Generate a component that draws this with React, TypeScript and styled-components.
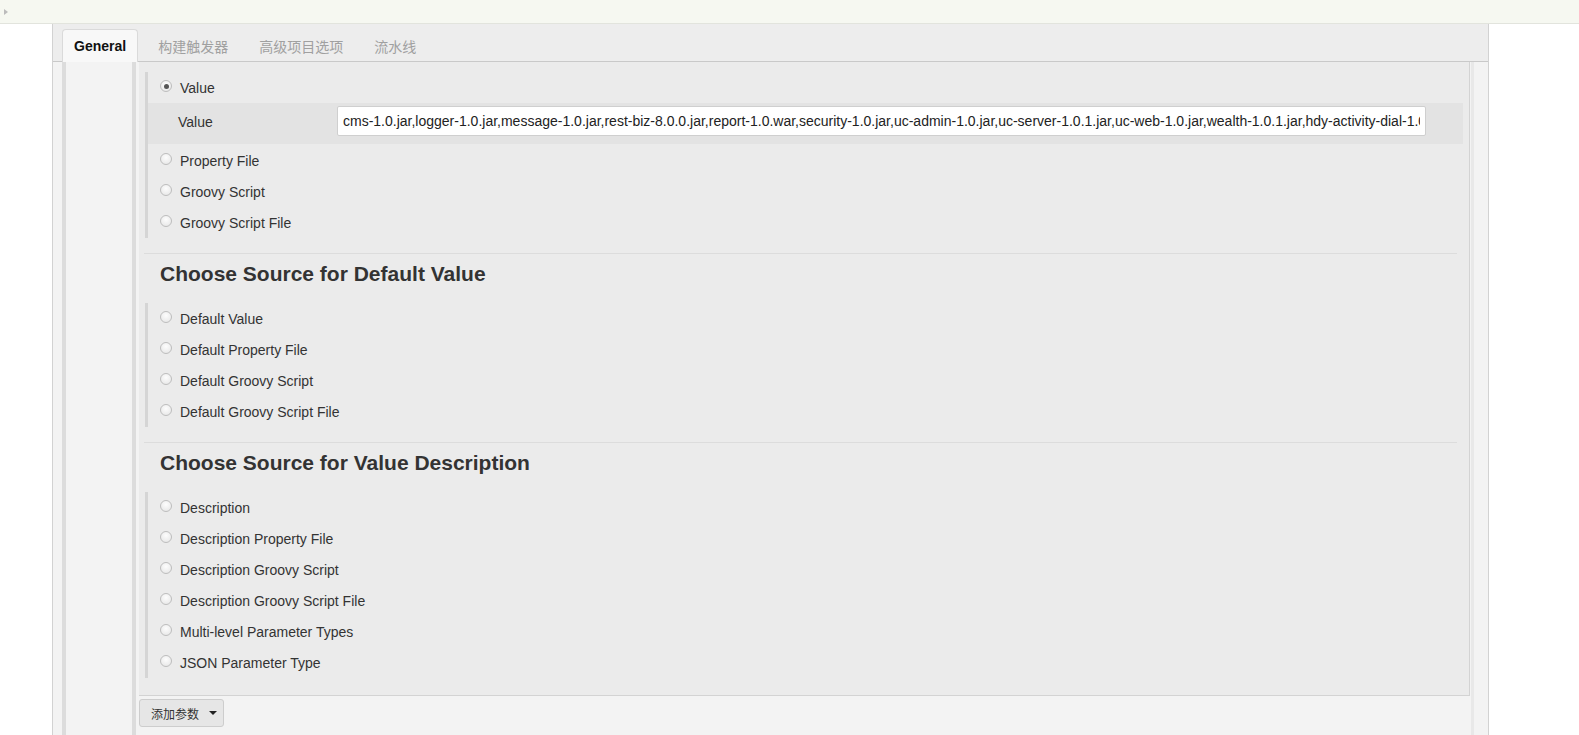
import React from "react";
import styled, { createGlobalStyle } from "styled-components";

const Global = createGlobalStyle`
  html, body { margin: 0; padding: 0; background: #fff; }
  body { font-family: "Liberation Sans", Arial, "Noto Sans CJK SC", sans-serif; color: #333; font-size: 14px; }
  * { box-sizing: border-box; }
`;

const TopBar = styled.div`
  height: 24px;
  background: #f6f8f1;
  border-bottom: 1px solid #e2e4dd;
  display: flex;
  align-items: center;
  padding-left: 4px;
`;

const Caret = styled.span`
  width: 0;
  height: 0;
  border-top: 3px solid transparent;
  border-bottom: 3px solid transparent;
  border-left: 4px solid #bcbcbc;
`;

const Main = styled.div`
  margin-left: 52px;
  width: 1437px;
  border-left: 1px solid #d2d2d2;
  border-right: 1px solid #d2d2d2;
  background: #f3f3f3;
  height: 711px;
  overflow: hidden;
  display: flex;
  flex-direction: column;
`;

const TabBar = styled.div`
  height: 38px;
  background: #ededed;
  border-bottom: 1px solid #c9c9c9;
  display: flex;
  align-items: flex-end;
  gap: 9px;
  padding-left: 9px;
`;

const Tab = styled.div<{ $active?: boolean }>`
  height: ${(p) => (p.$active ? "33px" : "31px")};
  padding: 0 11px;
  display: flex;
  align-items: center;
  font-size: 14px;
  font-family: "Liberation Sans", Arial, "Noto Sans CJK SC", sans-serif;
  color: ${(p) => (p.$active ? "#111" : "#a0a0a0")};
  font-weight: ${(p) => (p.$active ? 700 : 400)};
  background: ${(p) => (p.$active ? "#f8f8f8" : "transparent")};
  border: ${(p) => (p.$active ? "1px solid #dadada" : "none")};
  border-bottom: none;
  border-radius: 4px 4px 0 0;
  margin-bottom: ${(p) => (p.$active ? "-1px" : "0")};
  position: relative;
`;

const Body = styled.div`
  flex: 1;
  padding-left: 9px;
  display: flex;
`;

const OuterLane = styled.div`
  flex: 1;
  border-left: 4px solid #dcdcdc;
  border-right: 3px solid #e8e8e8;
  margin-right: 14px;
  padding-left: 66px;
  display: flex;
`;

const InnerLane = styled.div`
  flex: 1;
  border-left: 4px solid #dcdcdc;
  padding-left: 3px;
  padding-right: 1px;
  display: flex;
  flex-direction: column;
`;

const Panel = styled.div`
  background: #ebebeb;
  border-right: 1px solid #d3d3d3;
  border-bottom: 1px solid #d3d3d3;
  padding: 10px 6px 17px 5px;
  display: flex;
  flex-direction: column;
`;

const Group = styled.div<{ $top?: number }>`
  margin-left: 1px;
  margin-top: ${(p) => p.$top ?? 0}px;
  border-left: 3px solid #d5d5d5;
  display: flex;
  flex-direction: column;
`;

const RadioRow = styled.label`
  height: 31px;
  display: flex;
  align-items: center;
  padding-left: 12px;
  gap: 8px;
  font-size: 14px;
  color: #333;
`;

const RadioDot = styled.span<{ $checked?: boolean }>`
  width: 12px;
  height: 12px;
  border-radius: 50%;
  border: 1px solid #bdbdbd;
  background: radial-gradient(circle at 50% 35%, #fdfdfd 0%, #e4e4e4 100%);
  display: inline-flex;
  align-items: center;
  justify-content: center;
  margin-top: -3px;
  &::after {
    content: "";
    width: 5px;
    height: 5px;
    border-radius: 50%;
    background: ${(p) => (p.$checked ? "#555" : "transparent")};
  }
`;

const FieldRow = styled.div`
  height: 41px;
  margin-bottom: 1px;
  background: #e3e3e3;
  display: flex;
  align-items: center;
  padding-left: 30px;
  padding-right: 37px;
`;

const FieldLabel = styled.span`
  width: 159px;
  font-size: 14px;
  color: #333;
  margin-top: -4px;
`;

const TextInput = styled.input`
  flex: 1;
  height: 30px;
  border: 1px solid #cfcfcf;
  border-radius: 2px;
  background: #fff;
  padding: 0 5px;
  font-family: "Liberation Sans", Arial, sans-serif;
  font-size: 14px;
  color: #222;
  margin-top: -5px;
  outline: none;
`;

const Separator = styled.div<{ $top: number }>`
  height: 1px;
  background: #dcdcdc;
  margin-top: ${(p) => p.$top}px;
  margin-right: 6px;
`;

const Heading = styled.h3`
  margin: 8px 0 0 16px;
  font-size: 21px;
  line-height: 24px;
  font-weight: 700;
  color: #333;
`;

const AddButton = styled.button`
  margin-top: 3px;
  align-self: flex-start;
  height: 28px;
  width: 85px;
  border: 1px solid #cdcdcd;
  border-radius: 3px;
  background: #e6e6e6;
  display: flex;
  align-items: center;
  padding: 0 0 0 11px;
  gap: 8px;
  font-family: "Noto Sans CJK SC", sans-serif;
  font-size: 12px;
  color: #333;
`;

const DownCaret = styled.span`
  width: 0;
  height: 0;
  border-left: 4px solid transparent;
  border-right: 4px solid transparent;
  border-top: 4px solid #222;
  margin-left: 2px;
`;

const Radio = ({ label, checked }: { label: string; checked?: boolean }) => (
  <RadioRow>
    <RadioDot $checked={checked} />
    {label}
  </RadioRow>
);

const VALUE =
  "cms-1.0.jar,logger-1.0.jar,message-1.0.jar,rest-biz-8.0.0.jar,report-1.0.war,security-1.0.jar,uc-admin-1.0.jar,uc-server-1.0.1.jar,uc-web-1.0.jar,wealth-1.0.1.jar,hdy-activity-dial-1.0.jar,hdy-activity-sign-1.0.jar";

export default function App() {
  return (
    <>
      <Global />
      <TopBar>
        <Caret />
      </TopBar>
      <Main>
        <TabBar>
          <Tab $active>General</Tab>
          <Tab>构建触发器</Tab>
          <Tab>高级项目选项</Tab>
          <Tab>流水线</Tab>
        </TabBar>
        <Body>
          <OuterLane>
            <InnerLane>
              <Panel>
                <Group>
                  <Radio label="Value" checked />
                  <FieldRow>
                    <FieldLabel>Value</FieldLabel>
                    <TextInput readOnly value={VALUE} />
                  </FieldRow>
                  <Radio label="Property File" />
                  <Radio label="Groovy Script" />
                  <Radio label="Groovy Script File" />
                </Group>
                <Separator $top={15} />
                <Heading>Choose Source for Default Value</Heading>
                <Group $top={17}>
                  <Radio label="Default Value" />
                  <Radio label="Default Property File" />
                  <Radio label="Default Groovy Script" />
                  <Radio label="Default Groovy Script File" />
                </Group>
                <Separator $top={15} />
                <Heading>Choose Source for Value Description</Heading>
                <Group $top={17}>
                  <Radio label="Description" />
                  <Radio label="Description Property File" />
                  <Radio label="Description Groovy Script" />
                  <Radio label="Description Groovy Script File" />
                  <Radio label="Multi-level Parameter Types" />
                  <Radio label="JSON Parameter Type" />
                </Group>
              </Panel>
              <AddButton>
                添加参数
                <DownCaret />
              </AddButton>
            </InnerLane>
          </OuterLane>
        </Body>
      </Main>
    </>
  );
}
